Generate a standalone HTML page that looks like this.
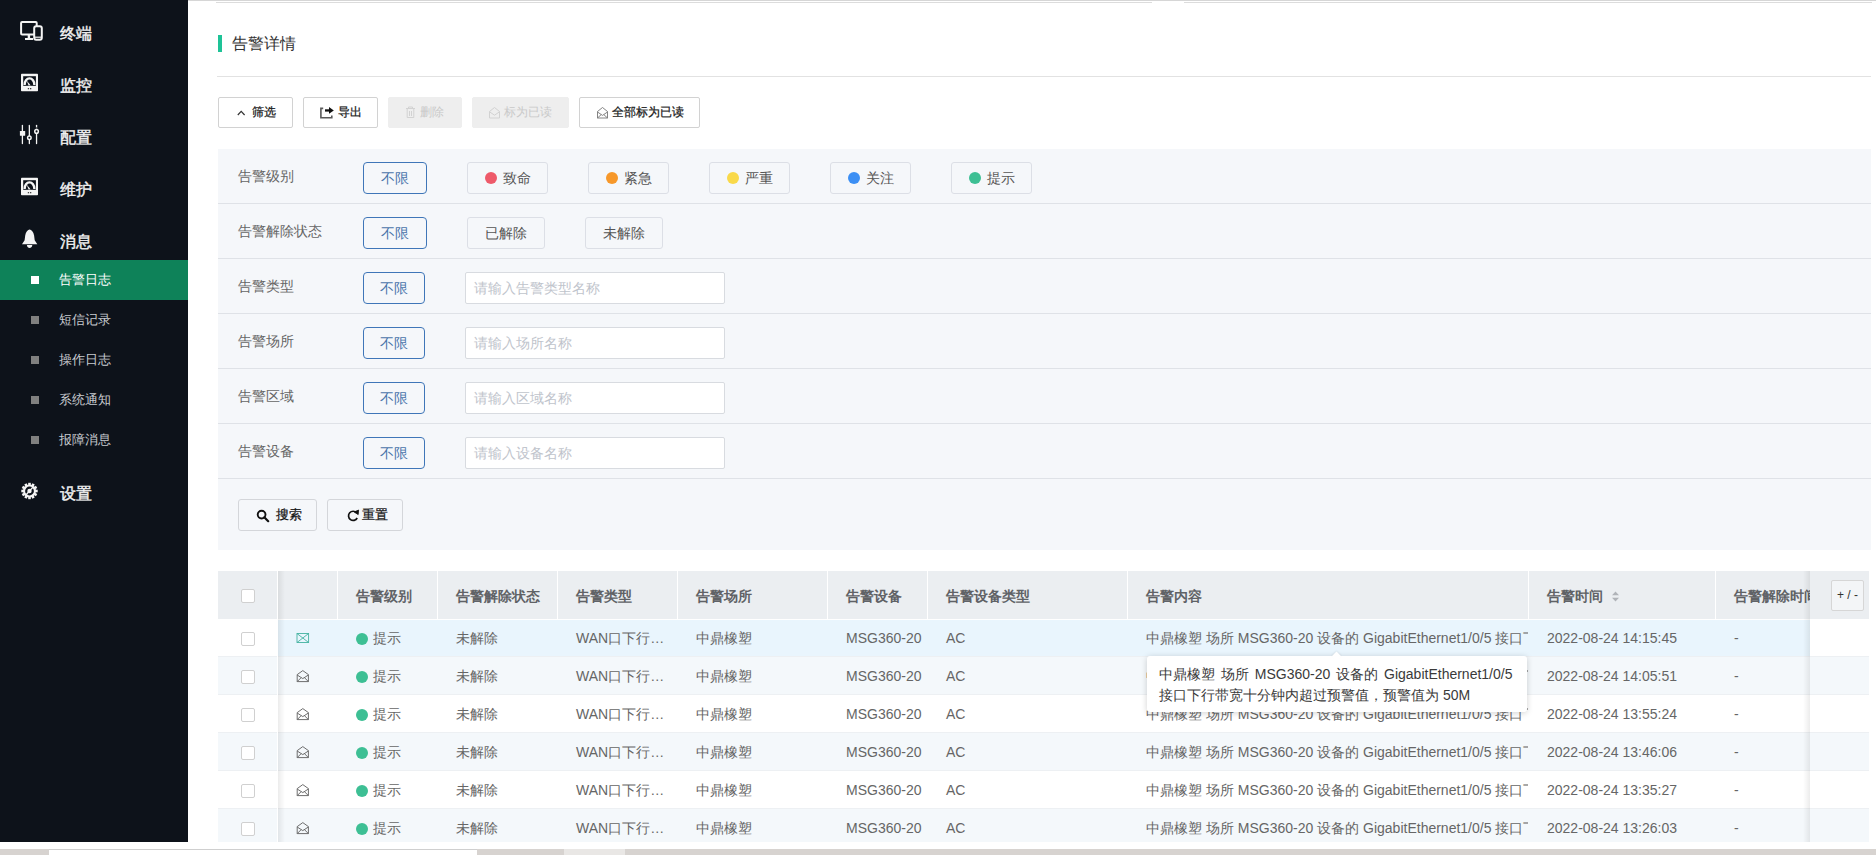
<!DOCTYPE html>
<html><head><meta charset="utf-8">
<style>
*{box-sizing:border-box;margin:0;padding:0}
html,body{width:1876px;height:855px;overflow:hidden;background:#fff;font-family:"Liberation Sans",sans-serif;position:relative}
.a{position:absolute}
#side{left:0;top:0;width:188px;height:842px;background:#0d121a}
.mi{position:absolute;left:0;width:188px;color:#f2f2f2;font-size:16px;line-height:20px}
.mi .t{position:absolute;left:60px;top:2px;-webkit-text-stroke:0.4px #f2f2f2}
.sub{position:absolute;left:0;width:188px;height:40px;color:#c8cbd0;font-size:13px;line-height:40px}
.sub .sq{position:absolute;left:31px;top:16px;width:8px;height:8px;background:#808080}
.sub .t{position:absolute;left:59px;top:0}
.sub.on{background:#0e8259;color:#fff}
.sub.on .sq{background:#fff}
.btn{position:absolute;top:97px;height:31px;border:1px solid #d2d2d2;border-radius:2px;background:#fff;font-size:12px;color:#333;line-height:29px;text-align:center}
.btn.dis{background:#eeeeee;border-color:#eeeeee;color:#c8c8c8}
#panel{left:218px;top:149px;width:1653px;height:401px;background:#f5f7fa}
.frow{position:absolute;left:0;width:1653px;height:55px;border-bottom:1px solid #dfe2e7}
.flab{position:absolute;left:20px;top:17px;font-size:14px;color:#666;line-height:20px}
.bx{position:absolute;top:13px;height:32px;border:1px solid #dcdfe6;border-radius:3px;background:#f5f7fa;font-size:14px;color:#555;line-height:30px;text-align:center}
.bx.sel{border-color:#3f76b8;color:#4a74aa;border-radius:4px}
.dot{display:inline-block;width:12px;height:12px;border-radius:50%;vertical-align:-1px;margin-right:6px}
.inp{position:absolute;left:247px;top:13px;width:260px;height:32px;border:1px solid #d8dbe0;border-radius:2px;background:#fff;font-size:14px;color:#c0c4cc;line-height:30px;padding-left:8px}
.sbtn{height:32px;border:1px solid #d4d6da;border-radius:3px;background:#f5f7fa;font-size:13px;color:#111;line-height:30px;text-align:center}
#tbl{left:218px;top:571px;width:1651px;height:271px;overflow:hidden}
.thead{position:absolute;left:0;top:0;width:1651px;height:48px;background:#ebeef1}
.th{position:absolute;top:0;height:48px;line-height:50px;padding-left:18px;font-size:14px;font-weight:bold;color:#606266;border-right:1px solid #fff;white-space:nowrap;overflow:hidden}
.tr{position:absolute;left:0;width:1651px;height:38px;background:#fff;border-bottom:1px solid #edf0f3}
.tr.st{background:#f4f8fb}
.tr.hov{background:#e9f5fd}
.td{position:absolute;top:0;height:37px;line-height:39px;padding-left:18px;padding-right:0;font-size:14px;color:#666;white-space:nowrap;overflow:hidden}
.gdot{display:inline-block;width:12px;height:12px;border-radius:50%;background:#3dbf94;vertical-align:-2px;margin-right:5px}
.bt{font-size:12px;color:#1a1a1a;line-height:16px;white-space:nowrap;-webkit-text-stroke:0.25px #1a1a1a}
.fl{position:absolute;left:0;width:60px;height:38px;background:#fff;border-bottom:1px solid #edf0f3}
.fl.st{background:#f4f8fb}
.fr{position:absolute;left:1592px;width:59px;height:38px;background:#fff;border-bottom:1px solid #edf0f3}
.fr.st{background:#f4f8fb}
.flh{position:absolute;left:0;top:0;width:60px;height:48px;background:#ebeef1}
.frh{position:absolute;left:1592px;top:0;width:59px;height:48px;background:#ebeef1}
.cb{position:absolute;left:23px;width:14px;height:14px;border:1px solid #d0d0d0;border-radius:2px;background:#fff}
.pm{position:absolute;left:21px;top:9px;width:33px;height:31px;border:1px solid #d6d6d6;border-radius:2px;background:#f3f5f7;font-size:12px;line-height:28px;text-align:center;color:#333}
.shl{position:absolute;left:60px;top:0;width:7px;height:271px;background:linear-gradient(90deg,rgba(0,0,0,0.075),rgba(0,0,0,0))}
.wl{position:absolute;left:59px;top:0;width:1px;height:271px;background:#fff}
.shr{position:absolute;left:1585px;top:0;width:7px;height:271px;background:linear-gradient(270deg,rgba(0,0,0,0.075),rgba(0,0,0,0))}
.env{position:absolute;left:18px;top:12px}
.td.el{padding-right:8px;text-overflow:ellipsis}
.tip{left:1147px;top:656px;width:380px;height:56px;background:#fff;border-radius:3px;box-shadow:0 1px 6px rgba(0,0,0,0.18)}
.tip .arr{position:absolute;left:186px;top:-3.5px;width:7px;height:7px;background:#fff;transform:rotate(45deg);box-shadow:-1px -1px 2px rgba(0,0,0,0.06)}
.tip .tt{position:absolute;left:12px;top:8px;font-size:14px;line-height:21px;color:#3a3a3a;white-space:nowrap}
</style></head><body>
<div id="side" class="a">
  <div class="mi" style="top:22px"><span class="t">终端</span></div>
  <div class="mi" style="top:74px"><span class="t">监控</span></div>
  <div class="mi" style="top:126px"><span class="t">配置</span></div>
  <div class="mi" style="top:178px"><span class="t">维护</span></div>
  <div class="mi" style="top:230px"><span class="t">消息</span></div>
  <div class="sub on" style="top:260px"><span class="sq"></span><span class="t">告警日志</span></div>
  <div class="sub" style="top:300px"><span class="sq"></span><span class="t">短信记录</span></div>
  <div class="sub" style="top:340px"><span class="sq"></span><span class="t">操作日志</span></div>
  <div class="sub" style="top:380px"><span class="sq"></span><span class="t">系统通知</span></div>
  <div class="sub" style="top:420px"><span class="sq"></span><span class="t">报障消息</span></div>
  <div class="mi" style="top:482px"><span class="t">设置</span></div>
</div>


<!-- sidebar icons -->
<svg class="a" style="left:0;top:0" width="60" height="520" viewBox="0 0 60 520">
  <g fill="none" stroke="#f4f4f4" stroke-width="2">
    <rect x="21.1" y="22" width="15.6" height="12.6" rx="1"/>
  </g>
  <rect x="27.7" y="35" width="2.4" height="3" fill="#f4f4f4"/>
  <rect x="25" y="38" width="8" height="2" fill="#f4f4f4"/>
  <rect x="34.2" y="26.2" width="7.6" height="13.6" rx="2" fill="#0d121a" stroke="#f4f4f4" stroke-width="2"/>
  <rect x="33" y="24.5" width="1" height="1" fill="#0d121a"/>
  <rect x="35" y="36.6" width="6" height="1.2" fill="#f4f4f4"/>
  <!-- monitor gauge -->
  <g id="gauge">
    <rect x="21" y="73.8" width="17" height="17.5" rx="0.8" fill="#f4f4f4"/>
    <rect x="23.2" y="76.2" width="12.7" height="9.6" fill="#0d121a"/>
    <path d="M24.6 85 A4.9 6.6 0 0 1 34.4 85" fill="none" stroke="#f4f4f4" stroke-width="2.4"/>
    <path d="M28.6 85.6 L26.6 80.6 L30.6 85.2 Z" fill="#f4f4f4"/>
    <rect x="27.8" y="88" width="1.3" height="1.3" fill="#444"/>
    <rect x="30" y="88" width="1.3" height="1.3" fill="#444"/>
  </g>
  <use href="#gauge" transform="translate(0,104)"/>
  <!-- sliders -->
  <g fill="#f4f4f4">
    <rect x="21.75" y="124.8" width="1.3" height="19.4" rx="0.65"/>
    <rect x="28.7" y="124.8" width="1.3" height="19.4" rx="0.65"/>
    <rect x="35.9" y="124.8" width="1.3" height="19.4" rx="0.65"/>
    <rect x="19.9" y="131" width="5.3" height="4.8" rx="0.5"/>
  </g>
  <g fill="#0d121a" stroke="#f4f4f4" stroke-width="1.5">
    <circle cx="29.35" cy="137.65" r="1.75"/>
    <circle cx="36.55" cy="131.4" r="1.8"/>
  </g>
  <rect x="35.5" y="127.4" width="2" height="1.2" fill="#0d121a"/>
  <!-- bell -->
  <path d="M29.6 229.6 C27.8 229.9 25.8 232 25.2 235.6 L24.6 240.2 L22 244.2 L37.3 244.2 L34.7 240.2 L34.1 235.6 C33.5 232 31.4 229.9 29.6 229.6 Z" fill="#f4f4f4"/>
  <path d="M26.9 244.9 C27.2 247.2 28.3 247.9 29.6 247.9 C30.9 247.9 32 247.2 32.3 244.9 Z" fill="#f4f4f4"/>
  <!-- gear -->
  <g transform="translate(29.5,491)">
    <g fill="#f4f4f4">
      <circle r="6.4"/>
      <rect x="-1.3" y="-8.2" width="2.6" height="16.4"/>
      <rect x="-1.3" y="-8.2" width="2.6" height="16.4" transform="rotate(30)"/>
      <rect x="-1.3" y="-8.2" width="2.6" height="16.4" transform="rotate(60)"/>
      <rect x="-1.3" y="-8.2" width="2.6" height="16.4" transform="rotate(90)"/>
      <rect x="-1.3" y="-8.2" width="2.6" height="16.4" transform="rotate(120)"/>
      <rect x="-1.3" y="-8.2" width="2.6" height="16.4" transform="rotate(150)"/>
    </g>
    <circle r="3.3" fill="none" stroke="#0d121a" stroke-width="2.2"/>
    <path d="M-3.4 3.8 L3.4 -3.8" stroke="#f4f4f4" stroke-width="1.3"/>
  </g>
</svg>

<!-- top line -->
<div class="a" style="left:188px;top:0;width:1688px;height:1px;background:#d6d6d6"></div>
<div class="a" style="left:216px;top:2px;width:936px;height:1px;background:#dcdcdc"></div>
<div class="a" style="left:1184px;top:2px;width:688px;height:1px;background:#dcdcdc"></div>
<!-- title -->
<div class="a" style="left:218px;top:35px;width:4px;height:17px;background:#1ec397"></div>
<div class="a" style="left:232px;top:34px;font-size:16px;line-height:20px;color:#333">告警详情</div>
<div class="a" style="left:217px;top:76px;width:1654px;height:1px;background:#e2e2e2"></div>

<!-- buttons -->
<div class="btn" style="left:218px;width:75px"></div>
<div class="btn" style="left:303px;width:75px"></div>
<div class="btn dis" style="left:388px;width:74px"></div>
<div class="btn dis" style="left:472px;width:97px"></div>
<div class="btn" style="left:579px;width:121px"></div>
<div class="a bt" style="left:252px;top:104px">筛选</div>
<div class="a bt" style="left:338px;top:104px">导出</div>
<div class="a bt" style="left:420px;top:104px;color:#c9c9c9;-webkit-text-stroke:0">删除</div>
<div class="a bt" style="left:504px;top:104px;color:#c9c9c9;-webkit-text-stroke:0">标为已读</div>
<div class="a bt" style="left:612px;top:104px">全部标为已读</div>
<svg class="a" style="left:0;top:90px" width="720" height="40" viewBox="0 90 720 40">
  <path d="M237.8 115 L241.2 111.4 L244.6 115" fill="none" stroke="#333" stroke-width="1.2"/>
  <path d="M323.2 108.4 H320.9 V117.8 H331.8 V115.6" fill="none" stroke="#5a5a5a" stroke-width="1.6"/>
  <rect x="325" y="109.3" width="4.6" height="2.3" fill="#111"/><path d="M329 106.9 L333.8 110.4 L329 113.8 Z" fill="#111"/>
  <g fill="none" stroke="#d2d2d2" stroke-width="1">
    <path d="M406 108.5 H415 M408.5 108.5 V107 H412.5 V108.5 M407.2 109 V117.5 H413.8 V109 M409.5 111 V116 M411.5 111 V116"/>
    <path d="M489.5 111.5 L494.5 107.5 L499.5 111.5 V118 H489.5 Z M489.5 111.8 L494.5 115.2 L499.5 111.8"/>
  </g>
  <g fill="none" stroke="#777" stroke-width="0.9">
    <path d="M597.5 111.5 L602.5 107.5 L607.5 111.5 V118 H597.5 Z M597.5 112 L602.5 115.4 L607.5 112 M597.5 118 L601.2 114.6 M607.5 118 L603.8 114.6"/>
  </g>
</svg>


<div id="panel" class="a">
  <div class="frow" style="top:0">
    <span class="flab">告警级别</span>
    <div class="bx sel" style="left:145px;width:64px">不限</div>
    <div class="bx" style="left:249px;width:81px"><span class="dot" style="background:#ee5a6a"></span>致命</div>
    <div class="bx" style="left:370px;width:81px"><span class="dot" style="background:#f7982a"></span>紧急</div>
    <div class="bx" style="left:491px;width:81px"><span class="dot" style="background:#f9d94a"></span>严重</div>
    <div class="bx" style="left:612px;width:81px"><span class="dot" style="background:#3c8ff4"></span>关注</div>
    <div class="bx" style="left:733px;width:81px"><span class="dot" style="background:#3dbf94"></span>提示</div>
  </div>
  <div class="frow" style="top:55px">
    <span class="flab">告警解除状态</span>
    <div class="bx sel" style="left:145px;width:64px">不限</div>
    <div class="bx" style="left:249px;width:78px">已解除</div>
    <div class="bx" style="left:367px;width:78px">未解除</div>
  </div>
  <div class="frow" style="top:110px">
    <span class="flab">告警类型</span>
    <div class="bx sel" style="left:145px;width:62px">不限</div>
    <div class="inp">请输入告警类型名称</div>
  </div>
  <div class="frow" style="top:165px">
    <span class="flab">告警场所</span>
    <div class="bx sel" style="left:145px;width:62px">不限</div>
    <div class="inp">请输入场所名称</div>
  </div>
  <div class="frow" style="top:220px">
    <span class="flab">告警区域</span>
    <div class="bx sel" style="left:145px;width:62px">不限</div>
    <div class="inp">请输入区域名称</div>
  </div>
  <div class="frow" style="top:275px">
    <span class="flab">告警设备</span>
    <div class="bx sel" style="left:145px;width:62px">不限</div>
    <div class="inp">请输入设备名称</div>
  </div>
</div>

<!-- search/reset -->
<div class="a sbtn" style="left:238px;top:499px;width:79px"></div>
<div class="a sbtn" style="left:327px;top:499px;width:76px"></div>
<div class="a bt" style="left:276px;top:507px;font-size:13px;color:#111">搜索</div>
<div class="a bt" style="left:362px;top:507px;font-size:13px;color:#111">重置</div>
<svg class="a" style="left:250px;top:505px" width="120" height="22" viewBox="250 505 120 22">
  <circle cx="261.6" cy="514.6" r="3.9" fill="none" stroke="#111" stroke-width="1.9"/>
  <path d="M264.3 517.3 L268.2 521.2" stroke="#111" stroke-width="2.2" stroke-linecap="round"/>
  <path d="M356.6 512.8 A4.6 4.6 0 1 0 357.2 518" fill="none" stroke="#111" stroke-width="1.7"/>
  <path d="M354.2 512 L358.6 510 L358.2 514.6 Z" fill="#111" stroke="#111" stroke-width="0.8"/>
</svg>

<!-- table -->
<div id="tbl" class="a">
  <div class="thead">
    <div class="th" style="left:120px;width:100px">告警级别</div>
    <div class="th" style="left:220px;width:120px">告警解除状态</div>
    <div class="th" style="left:340px;width:120px">告警类型</div>
    <div class="th" style="left:460px;width:150px">告警场所</div>
    <div class="th" style="left:610px;width:100px">告警设备</div>
    <div class="th" style="left:710px;width:200px">告警设备类型</div>
    <div class="th" style="left:910px;width:401px">告警内容</div>
    <div class="th" style="left:1311px;width:187px">告警时间<svg style="position:absolute;left:82px;top:20px" width="9" height="11" viewBox="0 0 9 11"><path d="M4.5 0.6 L8 4.3 H1 Z M4.5 10.4 L8 6.7 H1 Z" fill="#b0b3b8"/></svg></div>
    <div class="th" style="left:1498px;width:200px">告警解除时间</div>
    <div class="th" style="left:60px;width:60px"></div>
  </div>
  <div class="tr hov" style="top:48px">
    <div class="td" style="left:60px;width:60px;padding:0"><svg class="env" width="14" height="14" viewBox="0 0 14 14"><rect x="1" y="2.5" width="11.6" height="9" fill="none" stroke="#45b3a2" stroke-width="0.9"/><path d="M1 2.5 L12.6 11.5 M12.6 2.5 L1 11.5" stroke="#45b3a2" stroke-width="0.9"/></svg></div>
    <div class="td" style="left:120px;width:100px"><span class="gdot"></span>提示</div>
    <div class="td" style="left:220px;width:120px">未解除</div>
    <div class="td el" style="left:340px;width:120px">WAN口下行带宽超过预警值</div>
    <div class="td" style="left:460px;width:150px">中鼎橡塑</div>
    <div class="td" style="left:610px;width:100px">MSG360-20</div>
    <div class="td" style="left:710px;width:200px">AC</div>
    <div class="td" style="left:910px;width:400px">中鼎橡塑 场所 MSG360-20 设备的 GigabitEthernet1/0/5 接口下行带宽十分钟内超过预警值</div>
    <div class="td" style="left:1311px;width:187px">2022-08-24 14:15:45</div>
    <div class="td" style="left:1498px;width:200px">-</div>
  </div>
  <div class="fl" style="top:48px"><span class="cb" style="top:13px"></span></div>
  <div class="fr" style="top:48px"></div>
  <div class="tr st" style="top:86px">
    <div class="td" style="left:60px;width:60px;padding:0"><svg class="env" width="14" height="14" viewBox="0 0 14 14"><path d="M1.2 5.6 L6.8 1.6 L12.4 5.6 V12.6 H1.2 Z M1.2 6 L6.8 9.6 L12.4 6 M1.2 12.6 L5.2 8.6 M12.4 12.6 L8.4 8.6" fill="none" stroke="#666" stroke-width="0.95"/></svg></div>
    <div class="td" style="left:120px;width:100px"><span class="gdot"></span>提示</div>
    <div class="td" style="left:220px;width:120px">未解除</div>
    <div class="td el" style="left:340px;width:120px">WAN口下行带宽超过预警值</div>
    <div class="td" style="left:460px;width:150px">中鼎橡塑</div>
    <div class="td" style="left:610px;width:100px">MSG360-20</div>
    <div class="td" style="left:710px;width:200px">AC</div>
    <div class="td" style="left:910px;width:400px">中鼎橡塑 场所 MSG360-20 设备的 GigabitEthernet1/0/5 接口下行带宽十分钟内超过预警值</div>
    <div class="td" style="left:1311px;width:187px">2022-08-24 14:05:51</div>
    <div class="td" style="left:1498px;width:200px">-</div>
  </div>
  <div class="fl st" style="top:86px"><span class="cb" style="top:13px"></span></div>
  <div class="fr st" style="top:86px"></div>
  <div class="tr" style="top:124px">
    <div class="td" style="left:60px;width:60px;padding:0"><svg class="env" width="14" height="14" viewBox="0 0 14 14"><path d="M1.2 5.6 L6.8 1.6 L12.4 5.6 V12.6 H1.2 Z M1.2 6 L6.8 9.6 L12.4 6 M1.2 12.6 L5.2 8.6 M12.4 12.6 L8.4 8.6" fill="none" stroke="#666" stroke-width="0.95"/></svg></div>
    <div class="td" style="left:120px;width:100px"><span class="gdot"></span>提示</div>
    <div class="td" style="left:220px;width:120px">未解除</div>
    <div class="td el" style="left:340px;width:120px">WAN口下行带宽超过预警值</div>
    <div class="td" style="left:460px;width:150px">中鼎橡塑</div>
    <div class="td" style="left:610px;width:100px">MSG360-20</div>
    <div class="td" style="left:710px;width:200px">AC</div>
    <div class="td" style="left:910px;width:400px">中鼎橡塑 场所 MSG360-20 设备的 GigabitEthernet1/0/5 接口下行带宽十分钟内超过预警值</div>
    <div class="td" style="left:1311px;width:187px">2022-08-24 13:55:24</div>
    <div class="td" style="left:1498px;width:200px">-</div>
  </div>
  <div class="fl" style="top:124px"><span class="cb" style="top:13px"></span></div>
  <div class="fr" style="top:124px"></div>
  <div class="tr st" style="top:162px">
    <div class="td" style="left:60px;width:60px;padding:0"><svg class="env" width="14" height="14" viewBox="0 0 14 14"><path d="M1.2 5.6 L6.8 1.6 L12.4 5.6 V12.6 H1.2 Z M1.2 6 L6.8 9.6 L12.4 6 M1.2 12.6 L5.2 8.6 M12.4 12.6 L8.4 8.6" fill="none" stroke="#666" stroke-width="0.95"/></svg></div>
    <div class="td" style="left:120px;width:100px"><span class="gdot"></span>提示</div>
    <div class="td" style="left:220px;width:120px">未解除</div>
    <div class="td el" style="left:340px;width:120px">WAN口下行带宽超过预警值</div>
    <div class="td" style="left:460px;width:150px">中鼎橡塑</div>
    <div class="td" style="left:610px;width:100px">MSG360-20</div>
    <div class="td" style="left:710px;width:200px">AC</div>
    <div class="td" style="left:910px;width:400px">中鼎橡塑 场所 MSG360-20 设备的 GigabitEthernet1/0/5 接口下行带宽十分钟内超过预警值</div>
    <div class="td" style="left:1311px;width:187px">2022-08-24 13:46:06</div>
    <div class="td" style="left:1498px;width:200px">-</div>
  </div>
  <div class="fl st" style="top:162px"><span class="cb" style="top:13px"></span></div>
  <div class="fr st" style="top:162px"></div>
  <div class="tr" style="top:200px">
    <div class="td" style="left:60px;width:60px;padding:0"><svg class="env" width="14" height="14" viewBox="0 0 14 14"><path d="M1.2 5.6 L6.8 1.6 L12.4 5.6 V12.6 H1.2 Z M1.2 6 L6.8 9.6 L12.4 6 M1.2 12.6 L5.2 8.6 M12.4 12.6 L8.4 8.6" fill="none" stroke="#666" stroke-width="0.95"/></svg></div>
    <div class="td" style="left:120px;width:100px"><span class="gdot"></span>提示</div>
    <div class="td" style="left:220px;width:120px">未解除</div>
    <div class="td el" style="left:340px;width:120px">WAN口下行带宽超过预警值</div>
    <div class="td" style="left:460px;width:150px">中鼎橡塑</div>
    <div class="td" style="left:610px;width:100px">MSG360-20</div>
    <div class="td" style="left:710px;width:200px">AC</div>
    <div class="td" style="left:910px;width:400px">中鼎橡塑 场所 MSG360-20 设备的 GigabitEthernet1/0/5 接口下行带宽十分钟内超过预警值</div>
    <div class="td" style="left:1311px;width:187px">2022-08-24 13:35:27</div>
    <div class="td" style="left:1498px;width:200px">-</div>
  </div>
  <div class="fl" style="top:200px"><span class="cb" style="top:13px"></span></div>
  <div class="fr" style="top:200px"></div>
  <div class="tr st" style="top:238px">
    <div class="td" style="left:60px;width:60px;padding:0"><svg class="env" width="14" height="14" viewBox="0 0 14 14"><path d="M1.2 5.6 L6.8 1.6 L12.4 5.6 V12.6 H1.2 Z M1.2 6 L6.8 9.6 L12.4 6 M1.2 12.6 L5.2 8.6 M12.4 12.6 L8.4 8.6" fill="none" stroke="#666" stroke-width="0.95"/></svg></div>
    <div class="td" style="left:120px;width:100px"><span class="gdot"></span>提示</div>
    <div class="td" style="left:220px;width:120px">未解除</div>
    <div class="td el" style="left:340px;width:120px">WAN口下行带宽超过预警值</div>
    <div class="td" style="left:460px;width:150px">中鼎橡塑</div>
    <div class="td" style="left:610px;width:100px">MSG360-20</div>
    <div class="td" style="left:710px;width:200px">AC</div>
    <div class="td" style="left:910px;width:400px">中鼎橡塑 场所 MSG360-20 设备的 GigabitEthernet1/0/5 接口下行带宽十分钟内超过预警值</div>
    <div class="td" style="left:1311px;width:187px">2022-08-24 13:26:03</div>
    <div class="td" style="left:1498px;width:200px">-</div>
  </div>
  <div class="fl st" style="top:238px"><span class="cb" style="top:13px"></span></div>
  <div class="fr st" style="top:238px"></div>

  <div class="flh"><span class="cb" style="top:18px"></span></div>
  <div class="frh"><div class="pm">+ / -</div></div>
  <div style="position:absolute;left:60px;top:48px;width:1532px;height:1px;background:#fff"></div><div class="wl"></div><div class="shl"></div>
  <div class="shr"></div>
</div>
<!-- tooltip -->
<div class="a tip">
  <div class="arr"></div>
  <div class="tt"><span style="word-spacing:2px">中鼎橡塑 场所 MSG360-20 设备的 GigabitEthernet1/0/5</span><br>接口下行带宽十分钟内超过预警值，预警值为 50M</div>
</div>
<!-- bottom strip -->
<div class="a" style="left:0;top:849px;width:1876px;height:6px;background:#d7d3d0"></div>
<div class="a" style="left:49px;top:849px;width:428px;height:6px;background:#fff;border-top:1px solid #cfcfcf"></div>
<div class="a" style="left:564px;top:849px;width:61px;height:6px;background:#e9e7e5"></div>
</body></html>
